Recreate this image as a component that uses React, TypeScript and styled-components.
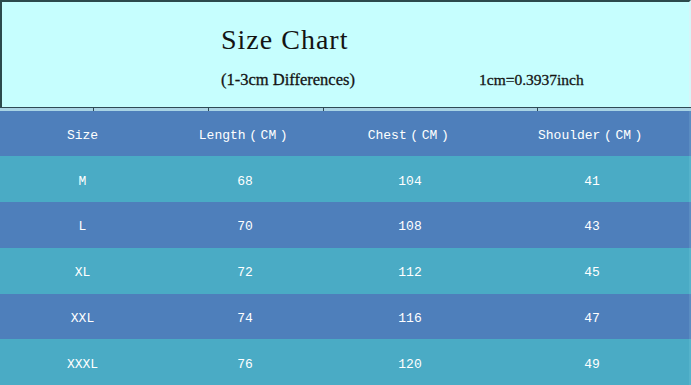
import React from "react";
import styled, { createGlobalStyle } from "styled-components";

interface SizeRow {
  size: string;
  length: number;
  chest: number;
  shoulder: number;
}

const rows: SizeRow[] = [
  { size: "M", length: 68, chest: 104, shoulder: 41 },
  { size: "L", length: 70, chest: 108, shoulder: 43 },
  { size: "XL", length: 72, chest: 112, shoulder: 45 },
  { size: "XXL", length: 74, chest: 116, shoulder: 47 },
  { size: "XXXL", length: 76, chest: 120, shoulder: 49 },
];

const GlobalStyle = createGlobalStyle`
  html, body {
    margin: 0;
    padding: 0;
    background: #4aabc5;
  }
`;

const Page = styled.div`
  width: 691px;
  height: 385px;
  overflow: hidden;
  display: flex;
  flex-direction: column;
`;

const Banner = styled.div`
  height: 106px;
  background: #c6fefe;
  border-top: 2px solid #2c4a4c;
  border-left: 2px solid #2c4a4c;
  border-right: 2px solid #d8f4f8;
  display: flex;
  flex-direction: column;
  padding-left: 219px;
`;

const Title = styled.div`
  margin-top: 22px;
  font-family: "Liberation Serif", serif;
  font-size: 28px;
  letter-spacing: 1px;
  line-height: 32px;
  color: #141414;
`;

const SubLine = styled.div`
  margin-top: 15px;
  display: flex;
  align-items: center;
  font-family: "Liberation Serif", serif;
  color: #141414;
  line-height: 18px;
`;

const Note = styled.span<{ $size: number; $width?: number }>`
  font-size: ${(p) => p.$size}px;
  width: ${(p) => (p.$width ? `${p.$width}px` : "auto")};
  -webkit-text-stroke: 0.3px #141414;
`;

const Rule = styled.div`
  height: 1px;
  background: #2f4a55;
`;

const TickRow = styled.div`
  display: grid;
  grid-template-columns: 93px 115px 115px 214px 1fr;
  height: 3px;
  background: #a9d4e4;
`;

const Tick = styled.div<{ $first?: boolean }>`
  border-left: ${(p) => (p.$first ? "none" : "1px solid #2f4a55")};
`;

const Row = styled.div<{ $tone: "blue" | "teal" }>`
  display: grid;
  grid-template-columns: 165px 160px 170px 1fr;
  height: 46px;
  align-items: center;
  background: ${(p) => (p.$tone === "blue" ? "#4e7fbb" : "#4aabc5")};
  border-right: 2px solid ${(p) => (p.$tone === "blue" ? "#5a8cc2" : "#55b3cb")};
`;

const HeadRow = styled(Row)`
  height: 45px;
`;

const Cell = styled.div`
  padding-top: 4px;
  text-align: center;
  font-family: "Liberation Mono", monospace;
  font-size: 13px;
  color: #ffffff;
  white-space: nowrap;
`;

const Paren = styled.span`
  display: inline-block;
  width: 15px;
  text-align: center;
`;

const headers = ["Size", "Length", "Chest", "Shoulder"];

export default function App() {
  return (
    <Page>
      <GlobalStyle />
      <Banner>
        <Title>Size Chart</Title>
        <SubLine>
          <Note $size={16.5} $width={258}>
            (1-3cm Differences)
          </Note>
          <Note $size={15.5}>1cm=0.3937inch</Note>
        </SubLine>
      </Banner>
      <Rule />
      <TickRow>
        <Tick $first />
        <Tick />
        <Tick />
        <Tick />
        <Tick />
      </TickRow>
      <HeadRow $tone="blue">
        {headers.map((h, i) => (
          <Cell key={h}>
            {h}
            {i > 0 && (
              <>
                <Paren>(</Paren>CM<Paren>)</Paren>
              </>
            )}
          </Cell>
        ))}
      </HeadRow>
      {rows.map((r, i) => (
        <Row key={r.size} $tone={i % 2 === 0 ? "teal" : "blue"}>
          <Cell>{r.size}</Cell>
          <Cell>{r.length}</Cell>
          <Cell>{r.chest}</Cell>
          <Cell>{r.shoulder}</Cell>
        </Row>
      ))}
    </Page>
  );
}
